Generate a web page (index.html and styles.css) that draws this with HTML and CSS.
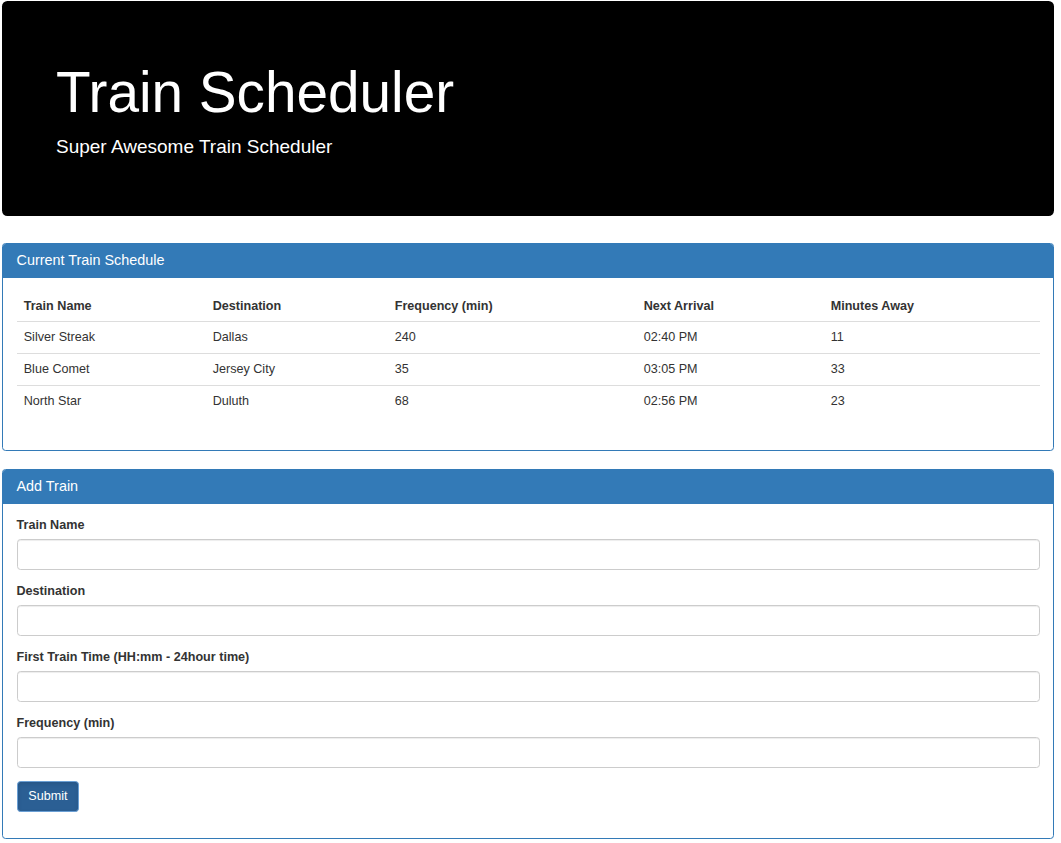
FILE: index.html
```html
<!DOCTYPE html>
<html lang="en">
<head>
<meta charset="utf-8">
<title>Train Scheduler</title>
<link rel="stylesheet" href="styles.css">
</head>
<body>
<div class="page">
  <header class="jumbotron">
    <h1 class="jumbo-title">Train Scheduler</h1>
    <p class="jumbo-sub">Super Awesome Train Scheduler</p>
  </header>

  <section class="panel">
    <div class="panel-heading"><h3 class="panel-title">Current Train Schedule</h3></div>
    <div class="panel-body">
      <table class="table">
        <thead>
          <tr>
            <th class="c1">Train Name</th>
            <th class="c2">Destination</th>
            <th class="c3">Frequency (min)</th>
            <th class="c4">Next Arrival</th>
            <th class="c5">Minutes Away</th>
          </tr>
        </thead>
        <tbody>
          <tr><td>Silver Streak</td><td>Dallas</td><td>240</td><td>02:40 PM</td><td>11</td></tr>
          <tr><td>Blue Comet</td><td>Jersey City</td><td>35</td><td>03:05 PM</td><td>33</td></tr>
          <tr><td>North Star</td><td>Duluth</td><td>68</td><td>02:56 PM</td><td>23</td></tr>
        </tbody>
      </table>
    </div>
  </section>

  <section class="panel">
    <div class="panel-heading"><h3 class="panel-title">Add Train</h3></div>
    <div class="panel-body">
      <form class="form">
        <div class="form-group">
          <label class="label" for="name">Train Name</label>
          <input class="input" id="name" type="text">
        </div>
        <div class="form-group">
          <label class="label" for="dest">Destination</label>
          <input class="input" id="dest" type="text">
        </div>
        <div class="form-group">
          <label class="label" for="first">First Train Time (HH:mm - 24hour time)</label>
          <input class="input" id="first" type="text">
        </div>
        <div class="form-group">
          <label class="label" for="freq">Frequency (min)</label>
          <input class="input" id="freq" type="text">
        </div>
        <div class="form-actions">
          <button class="btn" type="button">Submit</button>
        </div>
      </form>
    </div>
  </section>
</div>
</body>
</html>
```

FILE: styles.css
```css
* { box-sizing: border-box; }
html, body { margin: 0; padding: 0; background: #fff; }
body {
  font-family: "Liberation Sans", Arial, Helvetica, sans-serif;
  font-size: 12.6px;
  line-height: 18px;
  color: #333;
}
.page {
  padding: 1px 7px 0 2px;
}
.jumbotron {
  background: #000;
  color: #fff;
  border-radius: 5.4px;
  padding: 43px 54px 42px 54px;
  margin-bottom: 27px;
}
.jumbo-title {
  margin: 18px 0 9px;
  font-size: 56.7px;
  line-height: 1.1;
  font-weight: 400;
}
.jumbo-sub {
  margin: 0 0 13.5px;
  font-size: 19px;
  line-height: 27px;
  font-weight: 400;
}
.panel {
  border: 1px solid #337ab7;
  border-radius: 3.6px;
  margin-bottom: 18px;
  background: #fff;
}
.panel-heading {
  background: #337ab7;
  color: #fff;
  padding: 9px 13.5px;
  border-radius: 2.6px 2.6px 0 0;
}
.panel-title {
  margin: 0;
  font-size: 14.4px;
  line-height: 15.84px;
  font-weight: 400;
}
.panel-body {
  padding: 13px 13.5px 15.5px;
}
.table {
  width: 100%;
  border-collapse: collapse;
  margin-bottom: 18px;
}
.table th, .table td {
  text-align: left;
  padding: 7px 7.2px;
  line-height: 17px;
  vertical-align: top;
}
.table th {
  font-weight: 700;
  border-bottom: 1.8px solid #ddd;
  padding-bottom: 6px;
}
.table tbody td {
  border-top: 1px solid #ddd;
}
.table tbody tr:first-child td { border-top: 0; }
.c1 { width: 189px; }
.c2 { width: 182px; }
.c3 { width: 249px; }
.c4 { width: 187px; }
.form { margin: 0; }
.form-group {
  margin-bottom: 13px;
}
.label {
  display: block;
  font-weight: 700;
  line-height: 17px;
  margin-bottom: 5px;
}
.input {
  display: block;
  width: 100%;
  height: 31px;
  padding: 5px 10.8px;
  font: inherit;
  color: #555;
  background: #fff;
  border: 1px solid #ccc;
  border-radius: 3.6px;
  box-shadow: inset 0 1px 1px rgba(0,0,0,.075);
}
.form-actions {
  margin-bottom: 11px;
}
.btn {
  display: inline-block;
  font: inherit;
  color: #fff;
  background: #2b5f94;
  border: 1px solid #6a9fd4;
  border-radius: 3.6px;
  padding: 5.4px 10.8px;
  line-height: 18px;
  cursor: pointer;
  box-shadow: inset 0 2px 4px rgba(0,0,0,.1);
}
```
